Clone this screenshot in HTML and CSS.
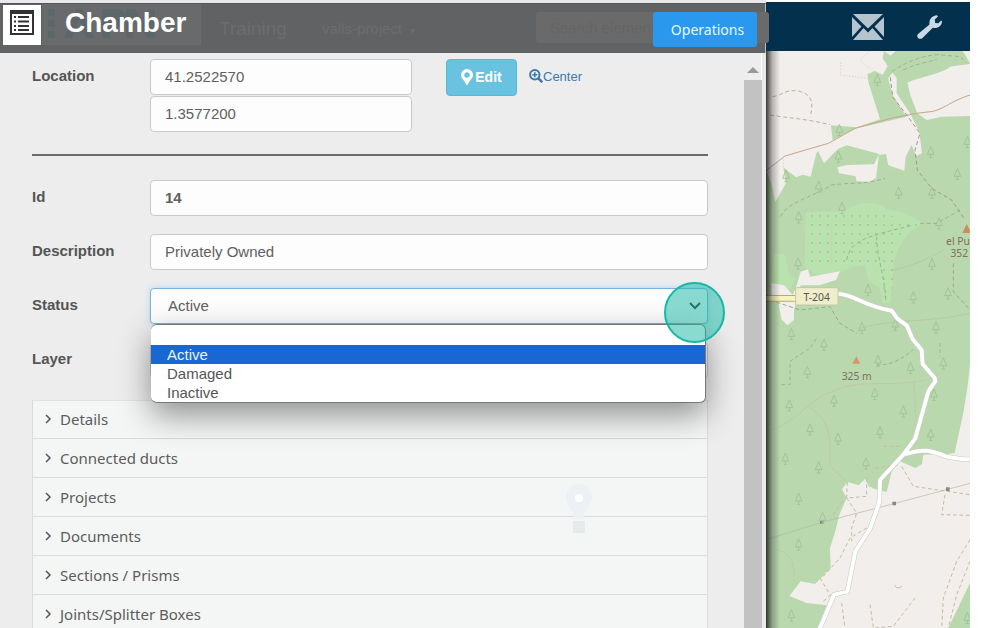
FILE: index.html
```html
<!DOCTYPE html>
<html lang="en">
<head>
<meta charset="utf-8">
<title>Chamber</title>
<link rel="stylesheet" href="styles.css">
</head>
<body>
<div class="app">
  <main class="panel">
    <header class="panel-head">
      <div class="underlay" aria-hidden="true">
        <span class="under-logo">
          <svg viewBox="0 0 159 41" width="159" height="41"><path fill="#5d666b" d="M6 5h7v7H6zM6 16h7v7H6zM6 27h7v7H6zM22 34L34 5h6l12 29h-8l-7-19-7 19zM60 5h14c14 0 14 18 0 18h-6v11h-8zM84 5h8l14 17V5h7v29h-7L91 16v18h-7z"/></svg>
        </span>
        <span class="under-name">Training</span>
        <span class="under-project">valls-project &nbsp;<small>▾</small></span>
        <span class="under-search">Search element</span>
      </div>
      <span class="head-icon">
        <svg viewBox="0 0 24 25" width="24" height="25" aria-hidden="true">
          <path fill="#333" fill-rule="evenodd" d="M0 0h24v25H0zM2 4v19h20V4z"/>
          <path stroke="#333" stroke-width="2" d="M8 7h11M8 11.500h11M8 16h11M8 20h11"/>
          <path stroke="#333" stroke-width="2" d="M4 7h2M4 11.500h2M4 16h2M4 20h2"/>
        </svg>
      </span>
      <h1>Chamber</h1>
      <button class="operations" type="button">Operations</button>
    </header>

    <div class="panel-body">
      <form class="form">
        <div class="row">
          <label for="lat">Location</label>
          <div class="location">
            <div class="coords">
              <input id="lat" type="text" value="41.2522570">
              <input type="text" value="1.3577200" aria-label="Longitude">
            </div>
            <button class="edit" type="button">
              <svg viewBox="0 0 12 16" width="12" height="16" aria-hidden="true"><path fill="#fff" fill-rule="evenodd" d="M6 0a6 6 0 0 0-6 6c0 3.500 4 6 5.200 9.400.3.800 1.300.8 1.600 0C8 12 12 9.500 12 6a6 6 0 0 0-6-6zm0 3.300a2.700 2.700 0 1 1 0 5.400 2.700 2.700 0 0 1 0-5.400z"/></svg>Edit</button>
            <a class="center" href="#center">
              <svg viewBox="0 0 14 14" width="14" height="14" fill="none" stroke="#3f78b0" aria-hidden="true"><circle cx="5.800" cy="5.800" r="4.700" stroke-width="2"/><path stroke-width="1.600" d="M3.300 5.800h5M5.800 3.300v5"/><path stroke-width="2.600" d="M9.200 9.200l4 4"/></svg>Center</a>
          </div>
        </div>
        <hr>
        <div class="row">
          <label for="id">Id</label>
          <input class="strong" id="id" type="text" value="14">
        </div>
        <div class="row">
          <label for="description">Description</label>
          <input id="description" type="text" value="Privately Owned">
        </div>
        <div class="row">
          <label for="status">Status</label>
          <div class="select">
            <select id="status"><option>Active</option><option>Damaged</option><option>Inactive</option></select>
            <svg class="caret" viewBox="0 0 12 8" width="12" height="8" aria-hidden="true"><path fill="none" stroke="#333" stroke-width="2" d="M1 1l5 5 5-5"/></svg>
            <ul class="options">
              <li></li>
              <li class="current">Active</li>
              <li>Damaged</li>
              <li>Inactive</li>
            </ul>
            <span class="click-mark"></span>
          </div>
        </div>
        <div class="row">
          <label for="layer">Layer</label>
          <input id="layer" type="text">
        </div>
      </form>

      <div class="sections">
        <button type="button"><svg viewBox="0 0 7 10" width="7" height="10" aria-hidden="true"><path d="M1 1l4 4-4 4"/></svg>Details</button>
        <button type="button"><svg viewBox="0 0 7 10" width="7" height="10" aria-hidden="true"><path d="M1 1l4 4-4 4"/></svg>Connected ducts</button>
        <button type="button"><svg viewBox="0 0 7 10" width="7" height="10" aria-hidden="true"><path d="M1 1l4 4-4 4"/></svg>Projects</button>
        <button type="button"><svg viewBox="0 0 7 10" width="7" height="10" aria-hidden="true"><path d="M1 1l4 4-4 4"/></svg>Documents</button>
        <button type="button"><svg viewBox="0 0 7 10" width="7" height="10" aria-hidden="true"><path d="M1 1l4 4-4 4"/></svg>Sections / Prisms</button>
        <button type="button"><svg viewBox="0 0 7 10" width="7" height="10" aria-hidden="true"><path d="M1 1l4 4-4 4"/></svg>Joints/Splitter Boxes</button>
        <svg class="faint-pin" viewBox="0 0 26 52" width="26" height="52" aria-hidden="true"><path fill="#edf1f6" d="M13 0a13 13 0 0 0-13 13c0 9 8 12 9 22h8c1-10 9-13 9-22A13 13 0 0 0 13 0z"/><circle cx="13" cy="14" r="4" fill="#fff"/><path fill="#e7eaea" d="M7 37h12v12H7z"/></svg>
      </div>
    </div>
    <div class="scrollbar" aria-hidden="true"><span class="scroll-up"></span><span class="scroll-thumb"></span></div>
  </main>

  <aside class="side">
    <nav class="topbar">
      <a href="#messages" aria-label="Messages">
        <svg viewBox="0 0 32 26" width="32" height="26"><path fill="#b4c5d0" d="M1 0h30L16 14.500zM0 3l9.500 9.500L0 23zM32 3l-9.500 9.500L32 23zM11.500 14l4.500 4.500 4.500-4.500L31 26H1z"/></svg>
      </a>
      <a href="#tools" aria-label="Tools">
        <svg viewBox="0 0 25 24" width="25" height="24"><path fill="#cad9e5" d="M1 19L12.500 9.500C11.800 4.500 15 .5 20 0.300L21 1.500 17.800 4.500 18.200 8 21.300 8.200 24.200 5.500 25 6.500C24.700 11 20.500 14 15.800 12.800L5.500 23C2.500 25.500-1.500 22 1 19z"/></svg>
      </a>
    </nav>
    <div class="map">
      <svg viewBox="18 3 612 1731" preserveAspectRatio="xMinYMin slice" role="img" aria-label="Map">
        <defs>
          <g id="tree" fill="none" stroke="#9dbf93" stroke-width="2.500"><path d="M0-17l-10 24h20zM0 7v10M-5 17h10"/></g>
          <pattern id="dots" width="24" height="27" patternUnits="userSpaceOnUse"><circle cx="12" cy="12" r="2" fill="#7fae7c"/></pattern>
        </defs>
        <path fill="#b9d8ae" d="M18 3h612v1731H18z"/>
        <path fill="#f1eeeb" d="M18 3H372L368 25 383 48 368 75 345 63 322 72 326 100 342 150 360 208 290 232 213 226 218 270 170 305 152 380 128 374 108 382 70 352 78 400 46 455 34 400 18 360z"/>
        <path fill="#f1eeeb" d="M18 330L85 300 170 275 218 270 290 235 440 200 400 140 384 85 398 68 410 84 410 130 450 190 478 245 486 310 468 318 455 285 437 320 433 362 385 346 378 312 357 315 348 384 328 395 290 394 286 378 237 370 232 352 262 345 342 343 358 312 260 286 235 296 215 316 192 340 174 302 152 340z"/>
        <path fill="#f1eeeb" d="M442 98C480 80 550 70 570 50L600 46 630 42V198L545 200 500 210 472 190 452 138z"/>
        <path fill="#f1eeeb" d="M608 3h22v36zM372 3h35l-15 14z"/>
        <path fill="#b9e2af" d="M136 488C200 478 230 495 268 474 300 455 360 452 378 476L435 490 490 520C450 535 410 590 402 640L392 758 368 760 358 715 325 690 316 645 280 650 240 670 165 672 134 650zM40 610l36 5 10 60 22 10-20 35-25-18-24 0z"/>
        <path fill="url(#dots)" d="M136 490H360L480 520 420 560 392 740H370L345 640H136z"/>
        <path fill="#f1eeeb" d="M34 700L72 705 98 735 108 712 122 665 144 658 150 680 240 664 228 690 178 706H122L102 780 102 810 82 826 64 808 56 760 35 748z"/>
        <path fill="none" stroke="#c8a68d" stroke-width="3" d="M18 362L75 318 205 280 285 235 400 203 470 190 520 184C560 172 570 155 630 135"/>
        <g fill="none" stroke="#c4aaa8" stroke-width="3" stroke-dasharray="12 8">
          <path d="M38 140C70 135 70 120 110 122 150 130 165 150 150 202M30 195C90 205 130 205 210 224"/>
          <path stroke="#b28d8c" d="M391 82L398 140 440 195 480 250 465 300 472 360 515 415 575 450 615 510"/>
          <path stroke="#9db38c" d="M395 65C450 30 480 20 530 14L600 20 620 38M430 60C470 40 500 38 530 28M62 500C75 460 160 440 215 405 300 395 310 405 375 385M480 520H530L600 480M260 630C270 570 320 560 460 525M350 560C350 620 375 680 378 758"/>
          <path stroke="#9ba79b" d="M580 640V725L630 780M30 750L120 780 210 770 240 820 290 850"/>
        </g>
        <path fill="none" stroke="#dfa9aa" stroke-width="2" stroke-dasharray="3 6" d="M242 38V75L325 85M330 3L300 30 340 65M70 320V350M370 365L420 390M215 520V640"/>
        <path fill="none" stroke="#b2c49b" stroke-width="2" d="M300 835C400 805 500 820 630 790M400 660C450 650 510 625 550 600"/>
        <g>
          <use href="#tree" x="352" y="90"/><use href="#tree" x="512" y="306"/><use href="#tree" x="592" y="372"/><use href="#tree" x="622" y="276"/><use href="#tree" x="235" y="320"/><use href="#tree" x="176" y="410"/><use href="#tree" x="416" y="428"/><use href="#tree" x="516" y="428"/><use href="#tree" x="246" y="474"/><use href="#tree" x="116" y="502"/><use href="#tree" x="537" y="520"/><use href="#tree" x="78" y="378"/><use href="#tree" x="516" y="642"/><use href="#tree" x="324" y="720"/><use href="#tree" x="460" y="742"/><use href="#tree" x="564" y="730"/><use href="#tree" x="306" y="834"/><use href="#tree" x="406" y="824"/><use href="#tree" x="528" y="832"/><use href="#tree" x="94" y="852"/><use href="#tree" x="114" y="640"/><use href="#tree" x="238" y="240"/>
        </g>
        <path stroke="#b9ae6d" stroke-width="20" d="M18 745h100"/>
        <path stroke="#f6f4be" stroke-width="14" d="M18 745h100"/>
        <g transform="translate(0 864)">
          <path fill="#f1eeeb" d="M630 80L622 150 608 235 600 270 584 345 560 348 490 350 486 378 466 390 420 370 395 400 380 462 350 455 326 445 316 422 296 442 262 432 246 454 260 480 238 530 226 580 210 630 212 690 165 738 122 730 88 774 140 795 200 802 172 870H565L630 735z"/>
          <path fill="none" stroke="#cbab90" stroke-width="2" stroke-dasharray="3 3" d="M40 275C130 235 150 180 220 160 300 120 400 150 500 125M150 210C220 250 210 320 210 385L260 430M48 635C80 640 105 660 102 720M462 130L468 240"/>
          <g fill="none" stroke="#c6bc9c" stroke-width="3" stroke-dasharray="11 8">
            <path d="M262 432L260 480 320 475 320 420M220 530L250 485M260 480L290 525 275 570 275 610M320 570L270 600 240 660 190 715M425 385L460 445 630 470M555 470L545 530 630 532M630 605L590 670 550 780 545 870M630 670L590 770 565 870M245 795L255 870M330 800L340 870 400 865 465 780M370 325H420M345 390L420 380M180 720L210 770M190 790L215 768"/>
            <path stroke="#9db38c" d="M65 140H90V70L150 30 170 0M350 80C390 85 430 60 460 35M540 15V55"/>
          </g>
          <path fill="none" stroke="#b3b6af" stroke-width="2" d="M18 605L185 553 402 497 563 454 630 436"/>
          <path fill="#888" d="M397 491h11v11h-11zM558 448h11v11h-11zM180 548h10v10h-10z"/>
          <path fill="none" stroke="#c6bc9c" stroke-width="3" d="M405 742c2 10 16 10 20 2"/>
          <use href="#tree" x="192" y="20"/><use href="#tree" x="142" y="102"/><use href="#tree" x="354" y="68"/><use href="#tree" x="452" y="90"/><use href="#tree" x="550" y="76"/><use href="#tree" x="88" y="202"/><use href="#tree" x="222" y="188"/><use href="#tree" x="344" y="168"/><use href="#tree" x="430" y="220"/><use href="#tree" x="150" y="274"/><use href="#tree" x="234" y="302"/><use href="#tree" x="360" y="282"/><use href="#tree" x="512" y="290"/><use href="#tree" x="76" y="362"/><use href="#tree" x="176" y="388"/><use href="#tree" x="318" y="376"/><use href="#tree" x="116" y="482"/><use href="#tree" x="188" y="540"/><use href="#tree" x="116" y="620"/><use href="#tree" x="94" y="832"/><use href="#tree" x="522" y="170"/><use href="#tree" x="622" y="840"/>
          <path fill="#dd9367" d="M289 55l12 22h-24z"/>
          <text class="map-text peak" x="290" y="126">325 m</text>
        </g>
        <g fill="none" stroke-linejoin="round" stroke-linecap="round">
          <path stroke="#c6cabf" stroke-width="15" d="M235 731C290 735 300 765 395 782L412 806 440 826 458 868 485 900 488 942 524 984 526 994 505 1024 466 1165 430 1214 360 1290 358 1356 330 1436 286 1504 262 1625 222 1634 180 1734M430 1214C490 1195 510 1200 560 1220L610 1228H640"/>
          <path stroke="#fff" stroke-width="12" d="M235 731C290 735 300 765 395 782L412 806 440 826 458 868 485 900 488 942 524 984 526 994 505 1024 466 1165 430 1214 360 1290 358 1356 330 1436 286 1504 262 1625 222 1634 180 1734M430 1214C490 1195 510 1200 560 1220L610 1228H640"/>
        </g>
        <rect x="107" y="713" width="127" height="52" rx="3" fill="#eeeecb" stroke="#c8c89e" stroke-width="3"/>
        <text class="map-text" x="170" y="752">T-204</text>
        <path fill="#c98d60" d="M620 522l14 27h-27z"/>
        <text class="map-text peak" x="594" y="584">el Pu</text>
        <text class="map-text peak" x="598" y="622">352</text>
      </svg>
    </div>
  </aside>
</div>
</body>
</html>
```

FILE: styles.css
```css
* { box-sizing: border-box; }

body {
  margin: 0;
  padding-right: 13px;
  background: #fff;
  font-family: "Liberation Sans", Arial, sans-serif;
  font-size: 15px;
  color: #555;
}

.app {
  display: grid;
  grid-template-columns: minmax(0, 1fr) 204px;
  height: 100vh;
  overflow: hidden;
}

.panel {
  position: relative;
  z-index: 1;
  display: grid;
  grid-template-columns: minmax(0, 1fr) 22px;
  grid-template-rows: 50px minmax(0, 1fr);
  min-height: 0;
  border-top: 3px solid #e9e9ed;
  background: #ecedec;
}

.panel-head {
  position: relative;
  grid-column: 1 / -1;
  display: flex;
  align-items: flex-start;
  padding: 1px 8px 0 3px;
  border-top: 1px solid #555;
  border-right: 1px solid #bbb;
  background: #616263;
}

.head-icon {
  position: relative;
  display: grid;
  place-items: center;
  width: 38px;
  height: 40px;
  padding-bottom: 6px;
  background: #fff;
}

h1 {
  position: relative;
  flex: 1;
  margin: 0 0 0 24px;
  font-size: 28px;
  line-height: 36px;
  color: #fff;
}

.operations {
  position: relative;
  width: 104px;
  height: 35px;
  margin-top: 7px;
  border: 0;
  border-radius: 3px;
  background: #2b98f0;
  color: #e3f8ff;
  font: 14px "Noto Sans", sans-serif;
  padding: 0 0 0 5px;
}

.underlay {
  position: absolute;
  inset: 0 -4px 0 42px;
  display: flex;
  align-items: flex-start;
  color: #6c6d6e;
  white-space: nowrap;
}

.under-logo {
  width: 159px;
  height: 41px;
  background: #696a6b;
}

.under-name {
  width: 103px;
  padding-left: 18px;
  font-size: 19px;
  line-height: 50px;
}

.under-project {
  flex: 1;
  padding-left: 18px;
  font-size: 15px;
  line-height: 50px;
}

.under-project small { font-size: 10px; }

.under-search {
  width: 233px;
  height: 31px;
  margin-top: 8px;
  padding-left: 14px;
  border-radius: 3px;
  background: #6b6a6a;
  color: #656565;
  line-height: 31px;
}

.panel-body {
  min-height: 0;
  padding: 6px 36px 0 32px;
  overflow: hidden;
}

.form {
  display: grid;
  row-gap: 18px;
}

.row {
  display: grid;
  grid-template-columns: 118px minmax(0, 1fr);
  align-items: start;
}

label {
  font-weight: bold;
  line-height: 33px;
}

input,
select {
  display: block;
  width: 100%;
  height: 36px;
  margin: 0;
  padding: 0 14px 2px;
  border: 1px solid #c8c9c9;
  border-radius: 4px;
  background: #fdfdfd;
  color: #606060;
  font: 15px "Liberation Sans", Arial, sans-serif;
}

.strong { font-weight: bold; }

.location {
  display: flex;
  align-items: flex-start;
}

.coords {
  display: grid;
  gap: 1px;
  width: 262px;
  margin-right: 34px;
}

.edit {
  display: flex;
  align-items: center;
  justify-content: center;
  gap: 2px;
  width: 71px;
  height: 37px;
  padding: 0 0 2px;
  border: 1px solid #55b9d8;
  border-radius: 4px;
  background: #69c2df;
  color: #fff;
  font: bold 14px "Liberation Sans", Arial, sans-serif;
}

.center {
  display: flex;
  align-items: center;
  height: 34px;
  margin-left: 12px;
  color: #3f78b0;
  font-size: 13px;
  text-decoration: none;
}

hr {
  width: 100%;
  height: 2px;
  margin: 4px 0 6px;
  border: 0;
  background: #696b68;
}

.select { position: relative; z-index: 2; }

select {
  appearance: none;
  padding-left: 17px;
  border-color: #79b1e4;
  box-shadow: 0 0 6px #b3d4f2;
}

.caret {
  position: absolute;
  top: 14px;
  right: 7px;
}

.options {
  position: absolute;
  top: 36px;
  left: 1px;
  right: 2px;
  margin: 0;
  padding: 1px 0 0;
  border: 1px solid #777;
  border-width: 1px 1px 1px 0;
  border-radius: 6px;
  background: #fff;
  box-shadow: 0 12px 32px rgba(0, 0, 0, 0.42);
  list-style: none;
  color: #555;
}

.options li {
  height: 19px;
  padding-left: 16px;
  line-height: 19px;
}

.options .current {
  background: #1967d2;
  color: #e6f5ff;
}

.click-mark {
  position: absolute;
  top: -6px;
  right: -17px;
  width: 61px;
  height: 61px;
  border: 2px solid #14b8a6;
  border-radius: 50%;
  background: rgba(20, 184, 166, 0.5);
}

.sections {
  position: relative;
  margin-top: 22px;
  border: 1px solid #d9dbdd;
  border-width: 0 1px;
  background: #f4f6f6;
  box-shadow: inset 0 1px #dfe1e2;
}

.sections button {
  display: flex;
  align-items: center;
  gap: 8px;
  width: 100%;
  height: 39px;
  padding: 0 12px 1px;
  border: 0;
  border-bottom: 1px solid #d9dbdd;
  background: none;
  color: #5c5c5c;
  font: 15px "Noto Sans", sans-serif;
  text-align: left;
}

.sections button svg {
  fill: none;
  stroke: #555;
  stroke-width: 1.5;
}

.faint-pin {
  position: absolute;
  top: 84px;
  right: 115px;
}

.scrollbar {
  display: flex;
  flex-direction: column;
  align-items: center;
  border-right: 4px solid #e9e9e9;
  box-shadow: inset -1px 0 #fff;
}

.scroll-up {
  height: 27px;
  padding-top: 14px;
}

.scroll-up::before {
  content: "";
  display: block;
  border: 6px solid transparent;
  border-top: 0;
  border-bottom-color: #999;
}

.scroll-thumb {
  flex: 1;
  width: 100%;
  background: #c1c2c1;
}

.side {
  display: flex;
  flex-direction: column;
  min-height: 0;
  padding-top: 2px;
}

.topbar {
  display: flex;
  align-items: center;
  justify-content: flex-end;
  gap: 33px;
  flex: none;
  height: 49px;
  padding-right: 28px;
  background: #03304d;
}

.topbar a,
.topbar svg { display: block; }

.map {
  position: relative;
  flex: 1;
  min-height: 0;
  overflow: hidden;
}

.map > svg {
  display: block;
  width: 100%;
  height: 100%;
}

.map::before {
  content: "";
  position: absolute;
  inset: 0 auto 0 0;
  width: 14px;
  background: linear-gradient(90deg, rgba(0, 0, 0, 0.75), rgba(0, 0, 0, 0.25) 45%, transparent);
}

.map-text {
  font: 31px "Noto Sans", sans-serif;
  fill: #555;
  text-anchor: middle;
}

.peak { fill: #806f5e; }
```
